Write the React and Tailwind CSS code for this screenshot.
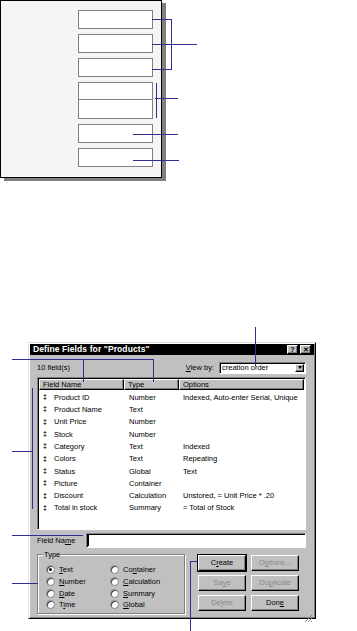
import React from 'react';

const font = "font-['Liberation_Sans',Arial,sans-serif]";

const raised = 'bg-[#c0c0c0] border border-t-white border-l-white border-r-black border-b-black shadow-[inset_-1px_-1px_0_#808080]';
const sunken = 'border border-t-[#808080] border-l-[#808080] border-r-white border-b-white shadow-[inset_1px_1px_0_#000]';

const rows = [
  ['Product ID', 'Number', 'Indexed, Auto-enter Serial, Unique'],
  ['Product Name', 'Text', ''],
  ['Unit Price', 'Number', ''],
  ['Stock', 'Number', ''],
  ['Category', 'Text', 'Indexed'],
  ['Colors', 'Text', 'Repeating'],
  ['Status', 'Global', 'Text'],
  ['Picture', 'Container', ''],
  ['Discount', 'Calculation', 'Unstored, = Unit Price * .20'],
  ['Total in stock', 'Summary', '= Total of Stock'],
];

const U = ({ children }) => <span className="underline underline-offset-1">{children}</span>;

const Radio = ({ on, children }) => (
  <div className="flex items-center h-[11.7px] gap-[4px]">
    <span className="relative w-[9px] h-[9px] rounded-full bg-white border border-[#808080] shadow-[inset_1px_1px_0_#404040]">
      {on && <span className="absolute left-[2px] top-[2px] w-[3px] h-[3px] rounded-full bg-black" />}
    </span>
    <span>{children}</span>
  </div>
);

const Btn = ({ children, dim, main }) => (
  <div
    className={`w-[48px] h-[16px] flex items-center justify-center ${raised} ${main ? 'outline outline-1 outline-black' : ''} ${dim ? 'text-[#8a8a8a]' : 'text-black'}`}
  >
    {children}
  </div>
);

// top block diagram
const Diagram = () => (
  <div className="h-[180px]">
    <div className="w-[162px] h-[178px] bg-[#f5f5f5] border border-black shadow-[4px_3px_0_#808080] pl-[77px] pt-[9px] flex flex-col gap-[5px]">
      <div className="w-[75px] h-[19px] bg-white border border-[#808080]" />
      <div className="w-[75px] h-[19px] bg-white border border-[#808080]" />
      <div className="w-[75px] h-[19px] bg-white border border-[#808080]" />
      <div className="w-[75px] h-[37px] bg-white border border-[#808080] flex flex-col">
        <div className="h-[17px] border-b border-[#808080]" />
      </div>
      <div className="w-[75px] h-[19px] bg-white border border-[#808080]" />
      <div className="w-[75px] h-[19px] bg-white border border-[#808080]" />
    </div>
  </div>
);

const Callouts = () => (
  <svg className="absolute inset-0 pointer-events-none" width="357" height="631" shapeRendering="crispEdges">
    <g stroke="#2e2e94" strokeWidth="1" fill="none">
      <polyline points="152,19.5 171.5,19.5 171.5,69.5 152,69.5" />
      <line x1="152" y1="44.5" x2="197" y2="44.5" />
      <line x1="156.5" y1="83" x2="156.5" y2="118" />
      <line x1="155" y1="98.5" x2="178" y2="98.5" />
      <line x1="133" y1="134.5" x2="178" y2="134.5" />
      <line x1="133" y1="160.5" x2="179" y2="160.5" />

      <line x1="255.5" y1="327" x2="255.5" y2="366" />
      <line x1="12" y1="359.5" x2="153.5" y2="359.5" />
      <line x1="83.5" y1="359" x2="83.5" y2="382" />
      <line x1="153.5" y1="359" x2="153.5" y2="382" />
      <line x1="32.5" y1="388" x2="32.5" y2="509" />
      <line x1="12" y1="451.5" x2="32" y2="451.5" />
      <line x1="12" y1="535.5" x2="83" y2="535.5" />
      <line x1="12" y1="583.5" x2="38" y2="583.5" />
      <polyline points="197,561.5 190.5,561.5 190.5,631" />
    </g>
  </svg>
);

const Dialog = () => (
  <div className={`ml-[28px] mt-[162px] w-[288px] h-[277px] bg-[#c0c0c0] border border-t-[#dfdfdf] border-l-[#dfdfdf] border-r-black border-b-black shadow-[inset_1px_1px_0_#fff,inset_-1px_-1px_0_#808080] p-[1px] flex flex-col text-[7.5px] text-black ${font}`}>
    <div className="h-[11px] bg-black flex items-center justify-between pl-[3px] pr-[3px]">
      <span className="text-white font-bold text-[8.5px] tracking-[0.1px]">Define Fields for "Products"</span>
      <div className="flex gap-[2px]">
        <div className={`w-[11px] h-[9px] flex items-center justify-center font-bold text-[7px] leading-none ${raised}`}>?</div>
        <div className={`w-[11px] h-[9px] flex items-center justify-center font-bold text-[7px] leading-none ${raised}`}>✕</div>
      </div>
    </div>

    <div className="pl-[7px] pr-[8px] flex flex-col">
      <div className="mt-[7px] h-[11px] flex items-center justify-between">
        <span>10 field(s)</span>
        <div className="flex items-center gap-[5px]">
          <span><U>V</U>iew by:</span>
          <div className={`w-[87px] h-[12px] bg-white flex items-center justify-between pl-[2px] pr-[1px] ${sunken}`}>
            <span>creation order</span>
            <div className={`w-[9px] h-[8px] flex items-center justify-center ${raised}`}>
              <span className="w-0 h-0 border-l-[2.5px] border-r-[2.5px] border-t-[3px] border-l-transparent border-r-transparent border-t-black" />
            </div>
          </div>
        </div>
      </div>

      <div className={`mt-[4px] h-[153px] bg-white p-[1px] flex flex-col ${sunken}`}>
        <div className="flex h-[11px]">
          <div className={`w-[85px] pl-[3px] flex items-center ${raised}`}>Field Name</div>
          <div className={`w-[55px] pl-[3px] flex items-center ${raised}`}>Type</div>
          <div className={`flex-1 pl-[3px] flex items-center ${raised}`}>Options</div>
        </div>
        <div className="mt-[1px] flex flex-col">
          {rows.map(([n, t, o]) => (
            <div key={n} className="flex items-center h-[12.33px] pl-[4px]">
              <span className="w-[11px] text-[7px] font-bold">‡</span>
              <span className="w-[75px]">{n}</span>
              <span className="w-[54px]">{t}</span>
              <span>{o}</span>
            </div>
          ))}
        </div>
      </div>

      <div className="mt-[3px] h-[15px] flex items-center">
        <span className="w-[49px]">Field Na<U>m</U>e</span>
        <div className={`flex-1 h-[15px] bg-white flex items-center pl-[1px] ${sunken}`}>
          <span className="w-[1px] h-[11px] bg-black" />
        </div>
      </div>

      <div className="mt-[5px] flex gap-[13px]">
        <div className="relative w-[148px] h-[60px] border border-[#808080] shadow-[inset_1px_1px_0_#fff,1px_1px_0_#fff] mt-[1px]">
          <span className="absolute -top-[6px] left-[5px] px-[1px] bg-[#c0c0c0]">Type</span>
          <div className="flex pl-[8px] pt-[9px]">
            <div className="w-[64px] flex flex-col">
              <Radio on><U>T</U>ext</Radio>
              <Radio><U>N</U>umber</Radio>
              <Radio><U>D</U>ate</Radio>
              <Radio>T<U>i</U>me</Radio>
            </div>
            <div className="flex flex-col">
              <Radio>Co<U>n</U>tainer</Radio>
              <Radio><U>C</U>alculation</Radio>
              <Radio><U>S</U>ummary</Radio>
              <Radio><U>G</U>lobal</Radio>
            </div>
          </div>
        </div>
        <div className="grid grid-cols-2 gap-x-[5px] gap-y-[4px] mt-[2px] h-fit">
          <Btn main>C<U>r</U>eate</Btn>
          <Btn dim>O<U>p</U>tions...</Btn>
          <Btn dim>Sa<U>v</U>e</Btn>
          <Btn dim>Du<U>p</U>licate</Btn>
          <Btn dim>De<U>l</U>ete</Btn>
          <Btn>Don<U>e</U></Btn>
        </div>
      </div>
    </div>

    <div className="mt-auto flex justify-end pr-[1px] pb-[1px]">
      <svg width="9" height="9" shapeRendering="crispEdges">
        <g strokeWidth="1">
          <line x1="8" y1="1" x2="1" y2="8" stroke="#808080" />
          <line x1="8" y1="4" x2="4" y2="8" stroke="#808080" />
          <line x1="8" y1="7" x2="7" y2="8" stroke="#808080" />
        </g>
      </svg>
    </div>
  </div>
);

const App = () => {
  return (
    <div className="relative w-[357px] h-[631px] bg-white overflow-hidden">
      <Diagram />
      <Dialog />
      <Callouts />
    </div>
  );
};

export default App;
